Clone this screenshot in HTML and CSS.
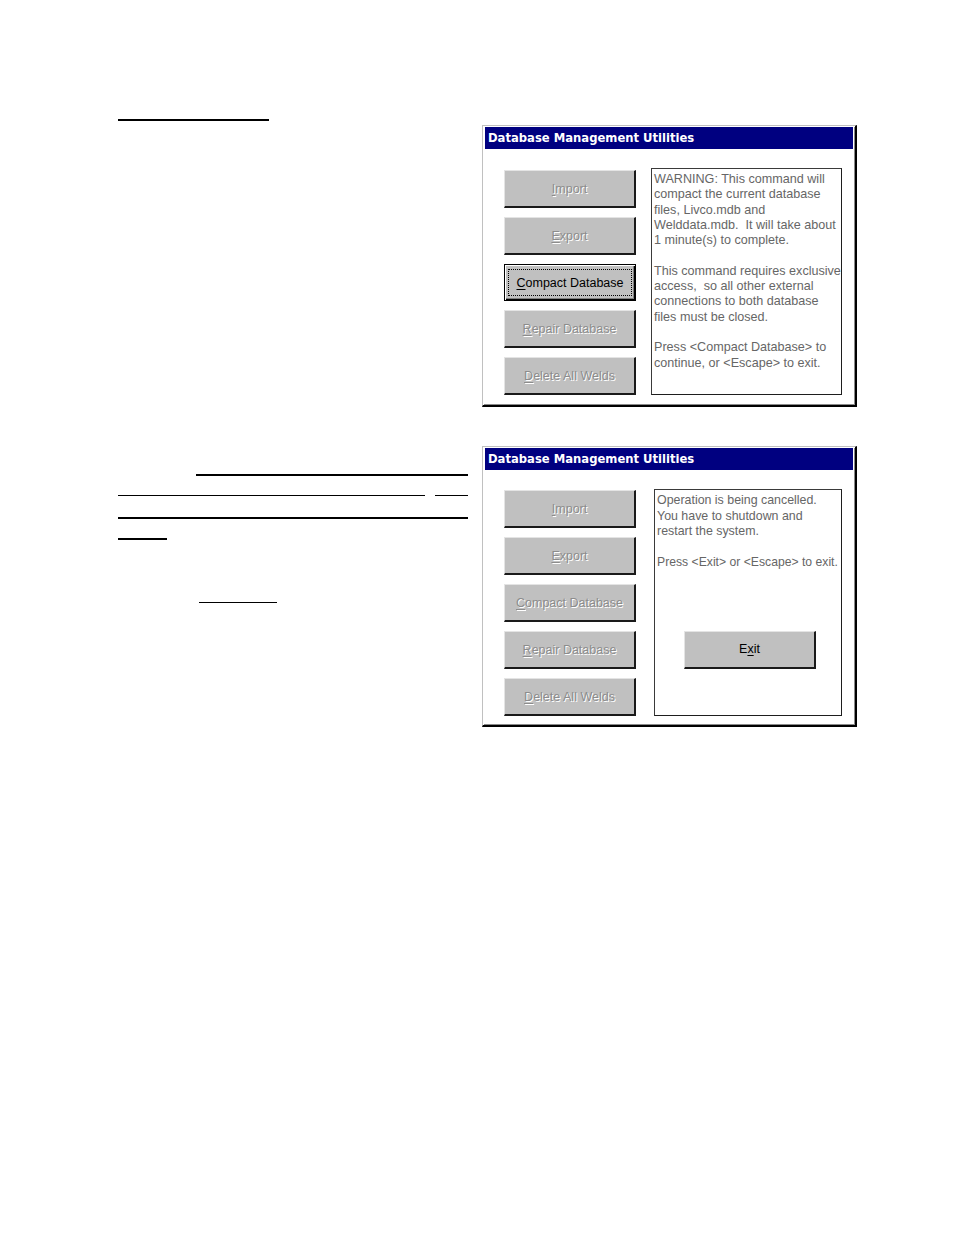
FILE: index.html
```html
<!DOCTYPE html>
<html>
<head>
<meta charset="utf-8">
<title>Database Management Utilities</title>
<link rel="stylesheet" href="styles.css">
</head>
<body>
<div class="page">
  <div class="left">
    <div class="rule thick r1"></div>
    <div class="rule thick r2"></div>
    <div class="rule-row r3">
      <div class="rule thin seg-a"></div>
      <div class="rule thin seg-b"></div>
    </div>
    <div class="rule thick r4"></div>
    <div class="rule thick r5"></div>
    <div class="rule thin r6"></div>
  </div>

  <div class="right">
    <div class="dialog">
      <div class="titlebar">Database Management Utilities</div>
      <div class="dbody">
        <div class="buttons">
          <div class="btn disabled"><span class="lbl"><u>I</u>mport</span></div>
          <div class="btn disabled"><span class="lbl"><u>E</u>xport</span></div>
          <div class="btn focused"><span class="lbl focus-rect"><u>C</u>ompact Database</span></div>
          <div class="btn disabled"><span class="lbl"><u>R</u>epair Database</span></div>
          <div class="btn disabled"><span class="lbl"><u>D</u>elete All Welds</span></div>
        </div>
        <div class="msgbox msg1">
          <p>WARNING: This command will compact the current database files, Livco.mdb and Welddata.mdb.&nbsp; It will take about 1 minute(s) to complete.</p>
          <p>This command requires exclusive access,&nbsp; so all other external connections to both database files must be closed.</p>
          <p>Press &lt;Compact Database&gt; to continue, or &lt;Escape&gt; to exit.</p>
        </div>
      </div>
    </div>

    <div class="dialog d2">
      <div class="titlebar">Database Management Utilities</div>
      <div class="dbody">
        <div class="buttons">
          <div class="btn disabled"><span class="lbl"><u>I</u>mport</span></div>
          <div class="btn disabled"><span class="lbl"><u>E</u>xport</span></div>
          <div class="btn disabled"><span class="lbl"><u>C</u>ompact Database</span></div>
          <div class="btn disabled"><span class="lbl"><u>R</u>epair Database</span></div>
          <div class="btn disabled"><span class="lbl"><u>D</u>elete All Welds</span></div>
        </div>
        <div class="msgbox msg2">
          <div class="msgtext">
            <p>Operation is being cancelled.<br>You have to shutdown and<br>restart the system.</p>
            <p class="nowrap">Press &lt;Exit&gt; or &lt;Escape&gt; to exit.</p>
          </div>
          <div class="btn exit"><span class="lbl">E<u>x</u>it</span></div>
        </div>
      </div>
    </div>
  </div>
</div>
</body>
</html>
```

FILE: styles.css
```css
html, body {
  margin: 0;
  padding: 0;
  background: #ffffff;
}

.page {
  display: flex;
  align-items: flex-start;
  padding-left: 118px;
}

/* ---------- left column: underline rules ---------- */
.left {
  width: 350px;
  padding-top: 119px;
  display: flex;
  flex-direction: column;
}

.rule {
  background: #000;
}
.rule.thick { height: 2px; }
.rule.thin { height: 1px; }

.r1 { width: 151px; }
.r2 { width: 272px; margin-left: 78px; margin-top: 353px; }
.rule-row {
  display: flex;
  gap: 10px;
  margin-top: 19px;
}
.seg-a { width: 307px; }
.seg-b { width: 33px; }
.r4 { width: 350px; margin-top: 21px; }
.r5 { width: 49px; margin-top: 19px; }
.r6 { width: 78px; margin-left: 81px; margin-top: 62px; }

/* ---------- right column: dialogs ---------- */
.right {
  margin-left: 14px;
  padding-top: 125px;
  display: flex;
  flex-direction: column;
  gap: 39px;
}

.dialog {
  box-sizing: border-box;
  width: 375px;
  height: 282px;
  background: #ffffff;
  border-style: solid;
  border-width: 1px 2px 2px 1px;
  border-color: #c0c0c0 #000 #000 #c0c0c0;
  box-shadow: inset 1px 1px 0 #ffffff, inset -1px -1px 0 #8a8a8a;
  padding: 1px 2px 2px 2px;
  display: flex;
  flex-direction: column;
}
.dialog.d2 { height: 281px; }

.titlebar {
  height: 22px;
  background: #000080;
  color: #ffffff;
  font-family: "DejaVu Sans", Verdana, sans-serif;
  font-weight: bold;
  font-size: 11.6px;
  line-height: 23px;
  padding-left: 3px;
  white-space: nowrap;
}

.dbody {
  display: flex;
  align-items: flex-start;
  padding: 19px 0 0 19px;
}

.buttons {
  width: 132px;
  display: flex;
  flex-direction: column;
  gap: 9px;
  margin-top: 2px;
}
.dialog.d2 .buttons { margin-top: 1px; }

.btn {
  box-sizing: border-box;
  width: 132px;
  height: 38px;
  background: #c0c0c0;
  border-style: solid;
  border-width: 1px 2px 2px 1px;
  border-color: #e4e4e4 #1a1a1a #1a1a1a #e4e4e4;
  display: flex;
  align-items: center;
  justify-content: center;
  font-family: "Liberation Sans", Arial, sans-serif;
  font-size: 12.5px;
  color: #000;
}
.btn u { text-decoration: underline; text-underline-offset: 2px; }

.btn.disabled {
  color: #8c8c8c;
  text-shadow: 1px 1px 0 #ffffff;
}

.btn.focused {
  height: 37px;
  border: 1px solid #000;
  box-shadow: inset 1px 1px 0 #ffffff, inset -1px -1px 0 #000, inset -2px -2px 0 #808080;
}
.focus-rect {
  box-sizing: border-box;
  width: 124px;
  height: 27px;
  border: 1px dotted #000;
  display: flex;
  align-items: center;
  justify-content: center;
}

.msgbox {
  box-sizing: border-box;
  background: #fff;
  border: 1px solid #1e1e1e;
  border-top-color: #3a3a3a;
  border-left-color: #3a3a3a;
  font-family: "Liberation Sans", Arial, sans-serif;
  font-size: 12.6px;
  line-height: 15.3px;
  color: #666666;
}
.msgbox p { margin: 0 0 15.3px 0; }

.msg1 {
  width: 191px;
  height: 227px;
  margin-left: 15px;
  padding: 3px 0 0 2px;
}

.msg2 {
  width: 188px;
  height: 227px;
  margin-left: 18px;
  padding: 3px 0 0 2px;
  font-size: 12.4px;
  line-height: 15.5px;
  display: flex;
  flex-direction: column;
}
.msg2 p { margin-bottom: 15.5px; }
.msg2 p.nowrap { white-space: nowrap; font-size: 12.2px; }
.msg2 .btn.exit {
  margin: auto 0 46px 27px;
  color: #000;
  font-size: 12.5px;
}
```
